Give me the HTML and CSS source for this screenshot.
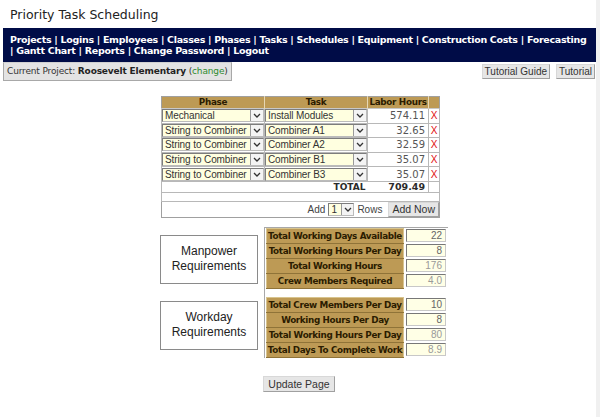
FILE: index.html
```html
<!DOCTYPE html>
<html>
<head>
<meta charset="utf-8">
<title>Priority Task Scheduling</title>
<link rel="stylesheet" href="styles.css">
</head>
<body>
<div class="page">
  <div class="title">Priority Task Scheduling</div>
  <div class="nav">Projects | Logins | Employees | Classes | Phases | Tasks | Schedules | Equipment | Construction Costs | Forecasting<br>| Gantt Chart | Reports | Change Password | Logout</div>
  <div class="toolbar">
    <div class="current">Current Project: <b>Roosevelt Elementary</b> (<span class="change">change</span>)</div>
    <div class="tut"><span class="btn">Tutorial Guide</span><span class="btn">Tutorial</span></div>
  </div>

  <table class="tasks">
    <tr class="head"><th class="c-phase">Phase</th><th class="c-task">Task</th><th class="c-hours">Labor Hours</th><th class="c-x"></th></tr>
    <tr><td><div class="sel"><span class="sv">Mechanical</span><span class="arr"><svg width="8" height="5" viewBox="0 0 8 5"><path d="M1 1 L4 4 L7 1" fill="none" stroke="#333" stroke-width="1.3"/></svg></span></div></td><td><div class="sel"><span class="sv">Install Modules</span><span class="arr"><svg width="8" height="5" viewBox="0 0 8 5"><path d="M1 1 L4 4 L7 1" fill="none" stroke="#333" stroke-width="1.3"/></svg></span></div></td><td class="num">574.11</td><td class="x">X</td></tr>
    <tr><td><div class="sel"><span class="sv">String to Combiner</span><span class="arr"><svg width="8" height="5" viewBox="0 0 8 5"><path d="M1 1 L4 4 L7 1" fill="none" stroke="#333" stroke-width="1.3"/></svg></span></div></td><td><div class="sel"><span class="sv">Combiner A1</span><span class="arr"><svg width="8" height="5" viewBox="0 0 8 5"><path d="M1 1 L4 4 L7 1" fill="none" stroke="#333" stroke-width="1.3"/></svg></span></div></td><td class="num">32.65</td><td class="x">X</td></tr>
    <tr><td><div class="sel"><span class="sv">String to Combiner</span><span class="arr"><svg width="8" height="5" viewBox="0 0 8 5"><path d="M1 1 L4 4 L7 1" fill="none" stroke="#333" stroke-width="1.3"/></svg></span></div></td><td><div class="sel"><span class="sv">Combiner A2</span><span class="arr"><svg width="8" height="5" viewBox="0 0 8 5"><path d="M1 1 L4 4 L7 1" fill="none" stroke="#333" stroke-width="1.3"/></svg></span></div></td><td class="num">32.59</td><td class="x">X</td></tr>
    <tr><td><div class="sel"><span class="sv">String to Combiner</span><span class="arr"><svg width="8" height="5" viewBox="0 0 8 5"><path d="M1 1 L4 4 L7 1" fill="none" stroke="#333" stroke-width="1.3"/></svg></span></div></td><td><div class="sel"><span class="sv">Combiner B1</span><span class="arr"><svg width="8" height="5" viewBox="0 0 8 5"><path d="M1 1 L4 4 L7 1" fill="none" stroke="#333" stroke-width="1.3"/></svg></span></div></td><td class="num">35.07</td><td class="x">X</td></tr>
    <tr><td><div class="sel"><span class="sv">String to Combiner</span><span class="arr"><svg width="8" height="5" viewBox="0 0 8 5"><path d="M1 1 L4 4 L7 1" fill="none" stroke="#333" stroke-width="1.3"/></svg></span></div></td><td><div class="sel"><span class="sv">Combiner B3</span><span class="arr"><svg width="8" height="5" viewBox="0 0 8 5"><path d="M1 1 L4 4 L7 1" fill="none" stroke="#333" stroke-width="1.3"/></svg></span></div></td><td class="num">35.07</td><td class="x">X</td></tr>
    <tr class="total"><td></td><td class="tl">TOTAL</td><td class="tv">709.49</td><td></td></tr>
    <tr class="blank"><td colspan="4"></td></tr>
    <tr class="add"><td colspan="4"><div class="addrow">Add <div class="sel small"><span class="sv">1</span><span class="arr"><svg width="8" height="5" viewBox="0 0 8 5"><path d="M1 1 L4 4 L7 1" fill="none" stroke="#333" stroke-width="1.3"/></svg></span></div> Rows <span class="btn addnow">Add Now</span></div></td></tr>
  </table>

  <div class="lower">
    <div class="boxes">
      <div class="box">Manpower<br>Requirements</div>
      <div class="box">Workday<br>Requirements</div>
    </div>
    <div class="req">
      <table class="rt">
        <tr><td class="lab">Total Working Days Available</td><td class="val"><div class="inp">22</div></td></tr>
        <tr><td class="lab">Total Working Hours Per Day</td><td class="val"><div class="inp">8</div></td></tr>
        <tr><td class="lab">Total Working Hours</td><td class="val"><div class="inp ro">176</div></td></tr>
        <tr><td class="lab">Crew Members Required</td><td class="val"><div class="inp ro">4.0</div></td></tr>
      </table>
      <div class="spacer"></div>
      <table class="rt">
        <tr><td class="lab">Total Crew Members Per Day</td><td class="val"><div class="inp">10</div></td></tr>
        <tr><td class="lab">Working Hours Per Day</td><td class="val"><div class="inp">8</div></td></tr>
        <tr><td class="lab">Total Working Hours Per Day</td><td class="val"><div class="inp ro">80</div></td></tr>
        <tr><td class="lab">Total Days To Complete Work</td><td class="val"><div class="inp ro">8.9</div></td></tr>
      </table>
    </div>
  </div>

  <div class="update"><span class="btn">Update Page</span></div>
</div>
</body>
</html>
```

FILE: styles.css
```css
html, body { margin: 0; padding: 0; }
body {
  background: #f0f0f0;
  font-family: "DejaVu Sans", Verdana, sans-serif;
  color: #222;
}
.page {
  width: 596px;
  height: 417px;
  background: #fff;
  overflow: hidden;
}
.title {
  font-size: 12.5px;
  padding: 7px 0 0 10px;
  box-sizing: border-box;
  height: 28px;
  color: #222;
}
.nav {
  margin-left: 3px;
  background: #000c47;
  color: #fff;
  font-weight: bold;
  font-size: 9.5px;
  letter-spacing: -0.3px;
  line-height: 11px;
  padding: 6px 7px;
  height: 34px;
  box-sizing: border-box;
  white-space: nowrap;
}
.toolbar {
  display: flex;
  justify-content: space-between;
  align-items: flex-start;
  height: 19px;
}
.current {
  margin-left: 3px;
  background: #e3e3e3;
  border: 1px solid #a8a8a8;
  border-top-color: #d0d0d0;
  font-size: 9px;
  letter-spacing: -0.15px;
  height: 19px;
  box-sizing: border-box;
  line-height: 17px;
  padding: 0 3px;
  width: 229px;
  color: #333;
  white-space: nowrap;
}
.current b { color: #222; }
.change { color: #2e8b2e; }
.tut {
  display: flex;
  gap: 6px;
  padding-top: 2px;
  margin-right: 1px;
}
.btn {
  display: inline-block;
  font-family: "Liberation Sans", Arial, sans-serif;
  font-size: 10px;
  color: #333;
  background: #e6e6e6;
  border: 1px solid #a0a0a0;
  border-top-color: #d8d8d8;
  border-left-color: #d8d8d8;
  height: 15px;
  line-height: 13px;
  padding: 0 2px;
  box-sizing: border-box;
}

/* task table */
.tasks {
  margin: 15px 0 0 161px;
  width: 276px;
  border-collapse: collapse;
  border: 1px solid #a0a0a0;
  table-layout: fixed;
}
.tasks td, .tasks th { padding: 0; }
.c-phase { width: 102px; }
.c-task { width: 102px; }
.c-hours { width: 60px; }
.c-x { width: 10px; }
.tasks .head th {
  background: #bd9a55;
  color: #2b1c00;
  font-size: 8.8px;
  letter-spacing: -0.3px;
  font-weight: bold;
  height: 11px;
  line-height: 11px;
  white-space: nowrap;
  border-right: 1px solid #e6d7b4;
}
.tasks .head th:last-child { border-right: none; }
.tasks td {
  height: 13.6px;
  border: 1px solid #b8b8b8;
  border-top-color: #c8c8c8;
}
.sel {
  display: flex;
  height: 13px;
  background: #ffffe0;
  border: 1px solid #7d7d7d;
  border-right-color: #bbb;
  border-bottom-color: #bbb;
  box-sizing: border-box;
  font-family: "Liberation Sans", Arial, sans-serif;
  font-size: 10px;
  letter-spacing: -0.1px;
  line-height: 11px;
  color: #333;
}
.sv {
  flex: 1;
  padding-left: 2px;
  white-space: nowrap;
  overflow: hidden;
}
.arr {
  width: 12px;
  display: flex;
  align-items: center;
  justify-content: center;
  background: #f4f4f4;
  border-left: 1px solid #9a9a9a;
}
.num {
  text-align: right;
  font-size: 10px;
  color: #555;
  padding-right: 3px !important;
}
.x {
  color: #e01010;
  font-family: "Liberation Sans", Arial, sans-serif;
  font-size: 10px;
  text-align: center;
}
.total td {
  height: 10px;
  font-size: 9px;
  font-weight: bold;
  line-height: 10px;
  color: #2b2b2b;
}
.total .tl { text-align: right; padding-right: 2px; border-right: none; }
.total .tv { text-align: right; padding-right: 3px; border-left: none; font-size: 9.5px; }
.total td:first-child { border-right: none; }
.total td:nth-child(2) { border-left: none; }
.blank td { height: 8px; }
.add td { height: 15px; border: none; }
.addrow {
  display: flex;
  justify-content: flex-end;
  align-items: center;
  gap: 3px;
  font-family: "Liberation Sans", Arial, sans-serif;
  font-size: 10px;
  color: #444;
  padding: 0;
}
.sel.small { width: 26px; background: #ffffe0; }
.sel.small .arr { width: 11px; }
.addnow { font-size: 10.5px; height: 15px; line-height: 13px; padding: 0 3px; margin-left: 3px; }

/* lower */
.lower {
  display: flex;
  margin: 9px 0 0 160px;
  gap: 6px;
}
.boxes {
  display: flex;
  flex-direction: column;
  padding-top: 8px;
  gap: 17px;
}
.box {
  width: 98px;
  height: 49px;
  box-sizing: border-box;
  border: 1px solid #8a8a8a;
  font-family: "Liberation Sans", Arial, sans-serif;
  font-size: 12px;
  line-height: 15px;
  text-align: center;
  padding-top: 8px;
  color: #222;
}
.req {
  border: 1px solid #a8a8a8;
  border-right: none;
  border-bottom: none;
  padding-left: 1px;
}
.rt {
  border-collapse: collapse;
}
.rt td { padding: 0; height: 15px; box-sizing: border-box; }
.rt .lab {
  width: 137px;
  background: #bd9a55;
  color: #2b1c00;
  font-weight: bold;
  font-size: 8.8px;
  letter-spacing: -0.35px;
  text-align: center;
  white-space: nowrap;
  border: 1px solid #d8c48e;
  border-bottom-color: #8f7338;
}
.rt .val {
  width: 44px;
  padding-left: 2px;
  background: #fff;
}
.inp {
  width: 40px;
  height: 13px;
  box-sizing: border-box;
  background: #ffffe6;
  border: 1px solid #777;
  border-right-color: #c8c8c8;
  border-bottom-color: #c8c8c8;
  font-family: "Liberation Sans", Arial, sans-serif;
  font-size: 10px;
  line-height: 11px;
  text-align: right;
  padding-right: 3px;
  color: #666;
}
.inp.ro { color: #9a9a9a; }
.spacer { height: 8px; }
.update {
  display: flex;
  justify-content: center;
  padding-top: 18px;
  margin-left: 2px;
}
.update .btn { height: 16px; line-height: 14px; padding: 0 4px; font-size: 10.5px; }
```
